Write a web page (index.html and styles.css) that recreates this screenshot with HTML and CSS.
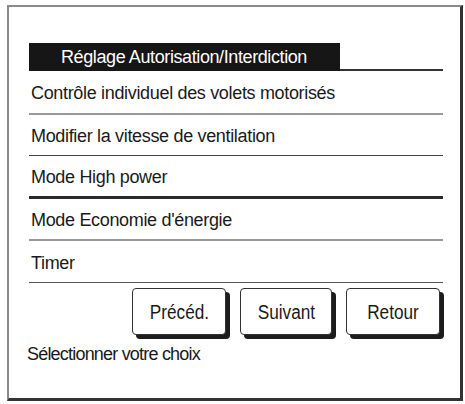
FILE: index.html
```html
<!DOCTYPE html>
<html lang="fr">
<head>
<meta charset="utf-8">
<link rel="stylesheet" href="styles.css">
</head>
<body>
<div class="frame">
  <div class="panel">
    <div class="header"><span class="title">Réglage Autorisation/Interdiction</span></div>
    <div class="row r1">Contrôle individuel des volets motorisés</div>
    <div class="row r2">Modifier la vitesse de ventilation</div>
    <div class="row r3">Mode High power</div>
    <div class="row r4">Mode Economie d'énergie</div>
    <div class="row r5">Timer</div>
    <div class="buttons">
      <div class="btn b1"><span class="label">Précéd.</span></div>
      <div class="btn b2"><span class="label">Suivant</span></div>
      <div class="btn b3"><span class="label">Retour</span></div>
    </div>
  </div>
  <div class="status">Sélectionner votre choix</div>
</div>
</body>
</html>
```
FILE: styles.css
```css
html, body {
  margin: 0;
  padding: 0;
  background: #fff;
}
body {
  font-family: "Liberation Sans", Arial, sans-serif;
  color: #1a1a1a;
}
.frame {
  box-sizing: border-box;
  margin: 5px 0 0 7px;
  width: 456px;
  height: 396px;
  border-top: 2px solid #8a8a8a;
  border-left: 2px solid #8a8a8a;
  border-right: 3px solid #333;
  border-bottom: 3px solid #333;
  padding: 36px 0 0 20px;
}
.panel {
  width: 414px;
}
.header {
  height: 26px;
  border-bottom: 2px solid #333;
  display: flex;
}
.title {
  display: block;
  width: 279px;
  height: 28px;
  background: #161616;
  color: #fff;
  font-size: 18px;
  line-height: 28px;
  letter-spacing: -0.4px;
  padding-left: 32px;
}
.row {
  box-sizing: border-box;
  display: flex;
  align-items: center;
  padding: 3px 0 0 2px;
  font-size: 18px;
  letter-spacing: -0.33px;
  border-bottom: 2px solid #9a9a9a;
}
.r1 { height: 44px; }
.r2 { height: 41px; border-bottom: 1px solid #444; }
.r3 { height: 43px; border-bottom: 3px solid #2a2a2a; }
.r4 { height: 42px; border-bottom: 2px solid #999; }
.r5 { height: 42px; border-bottom: 1px solid #555; }
.buttons {
  display: flex;
  justify-content: flex-end;
  gap: 14px;
  padding: 5px 3px 0 0;
}
.btn {
  box-sizing: border-box;
  height: 47px;
  border: 1px solid #333;
  border-radius: 4px;
  box-shadow: 4px 4px 0 0 #1c1c1c;
  display: flex;
  align-items: center;
  justify-content: center;
  background: #fff;
}
.label {
  display: block;
  font-size: 20px;
  transform: scaleX(0.86);
  margin-top: 1px;
}
.b1 { width: 94px; }
.b2 { width: 92px; }
.b3 { width: 94px; }
.status {
  font-size: 18px;
  letter-spacing: -0.8px;
  margin: 9px 0 0 -2px;
}
```
